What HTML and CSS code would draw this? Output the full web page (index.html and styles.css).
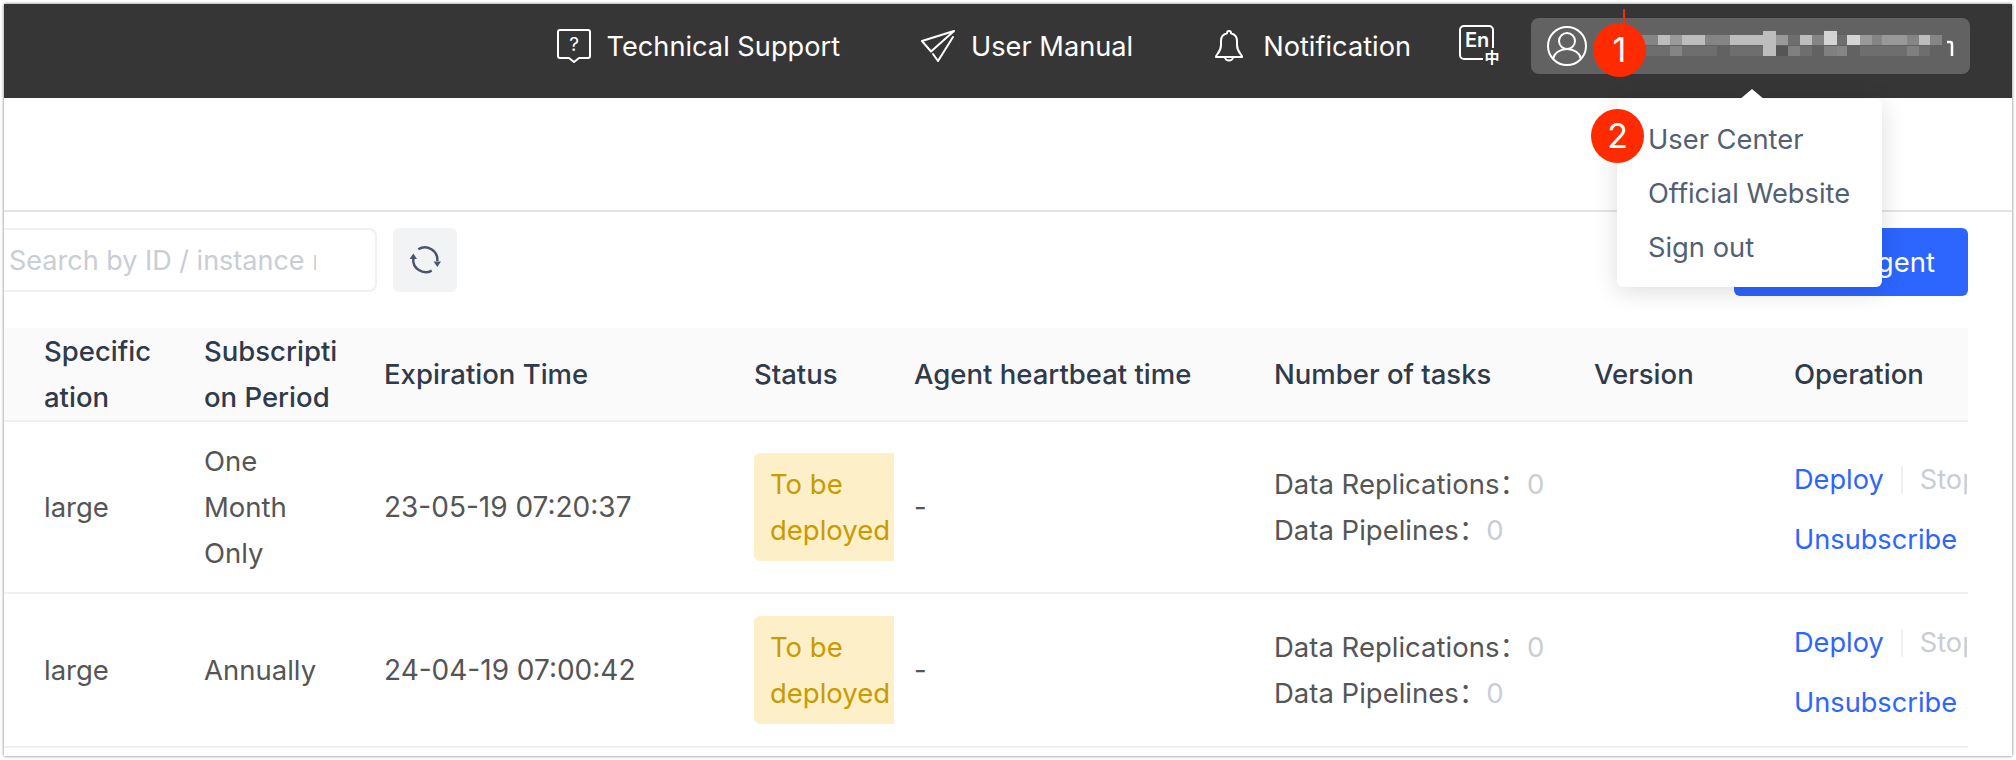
FILE: index.html
```html
<!DOCTYPE html>
<html lang="en">
<head>
    <meta charset="UTF-8">
    <title>Agent Management</title>
    <link rel="stylesheet" href="styles.css">
</head>
<body>
<div class="window">

    <header class="topbar">
        <a class="nav-item">
            <svg class="nav-icon" width="34" height="34" viewBox="0 0 34 34" fill="none" stroke="#fff" stroke-width="2" stroke-linejoin="round">
                <path d="M3 1h28a2 2 0 0 1 2 2v24a2 2 0 0 1-2 2h-9l-5 4-5-4H3a2 2 0 0 1-2-2V3a2 2 0 0 1 2-2z"/>
                <text class="icon-q" x="17" y="22" text-anchor="middle">?</text>
            </svg>
            <span>Technical Support</span>
        </a>
        <a class="nav-item">
            <svg class="nav-icon" width="35" height="34" viewBox="0 0 35 34" fill="none" stroke="#fff" stroke-width="2" stroke-linejoin="round" stroke-linecap="round">
                <path d="M34 2L2 12l9 10.500L34 2z"/>
                <path d="M33 8L18 32l-5-7"/>
            </svg>
            <span>User Manual</span>
        </a>
        <a class="nav-item nav-item-bell">
            <svg class="nav-icon" width="32" height="34" viewBox="0 0 32 34" fill="none" stroke="#fff" stroke-width="2" stroke-linejoin="round">
                <path d="M3 28c-1-2 5-4 5-12v-4a8 8 0 0 1 6-7.700V4a2 2 0 0 1 4 0v.3a8 8 0 0 1 6 7.700v4c0 8 6 10 5 12z"/>
                <path d="M12 28a4 3.500 0 0 0 8 0"/>
            </svg>
            <span>Notification</span>
        </a>
        <svg class="lang-icon" width="42" height="42" viewBox="0 0 42 42" fill="none" stroke="#fff" stroke-width="2">
            <path d="M24 34H5a4 4 0 0 1-4-4V5a4 4 0 0 1 4-4h25a4 4 0 0 1 4 4v18"/>
            <text class="icon-en" x="6" y="22">En</text>
            <text class="icon-zh" x="25.500" y="38">中</text>
        </svg>
        <div class="user-pill">
            <svg width="40" height="40" viewBox="0 0 40 40" fill="none" stroke="#fff" stroke-width="2">
                <circle cx="20" cy="20" r="19"/>
                <circle cx="20" cy="15" r="8"/>
                <path d="M6 33c1-6 7-10 14-10s13 4 14 10"/>
            </svg>
            <svg class="mosaic" width="315" height="40" viewBox="0 0 315 40">
                <g fill="#858585">
                    <rect x="0" y="5" width="18" height="10"/>
                    <rect x="65" y="5" width="25" height="10"/>
                    <rect x="172" y="5" width="12" height="10"/>
                    <rect x="232" y="5" width="10" height="10"/>
                    <rect x="267" y="5" width="12" height="10"/>
                    <rect x="290" y="5" width="12" height="10"/>
                    <rect x="30" y="16" width="12" height="10"/>
                    <rect x="197" y="16" width="10" height="10"/>
                </g>
                <g fill="#bdbdbd">
                    <rect x="18" y="5" width="12" height="10"/>
                    <rect x="42" y="5" width="23" height="10"/>
                    <rect x="90" y="5" width="46" height="10"/>
                    <rect x="123" y="1" width="13" height="25"/>
                    <rect x="160" y="5" width="12" height="10"/>
                    <rect x="279" y="5" width="11" height="10"/>
                </g>
                <g fill="#999">
                    <rect x="30" y="5" width="12" height="10"/>
                    <rect x="136" y="5" width="12" height="10"/>
                    <rect x="220" y="5" width="12" height="10"/>
                    <rect x="242" y="5" width="13" height="10"/>
                    <rect x="255" y="5" width="12" height="10"/>
                </g>
                <g fill="#d4d4d4">
                    <rect x="184" y="1" width="13" height="14"/>
                    <rect x="207" y="5" width="13" height="10"/>
                </g>
                <g fill="#6e6e6e">
                    <rect x="148" y="5" width="12" height="10"/>
                    <rect x="197" y="5" width="10" height="10"/>
                    <rect x="6" y="16" width="24" height="10"/>
                    <rect x="42" y="16" width="35" height="10"/>
                    <rect x="90" y="16" width="33" height="10"/>
                    <rect x="160" y="16" width="12" height="10"/>
                    <rect x="220" y="16" width="22" height="10"/>
                    <rect x="242" y="16" width="25" height="10"/>
                    <rect x="279" y="16" width="11" height="10"/>
                </g>
                <g fill="#808080">
                    <rect x="148" y="16" width="12" height="10"/>
                    <rect x="184" y="16" width="13" height="10"/>
                    <rect x="267" y="16" width="12" height="10"/>
                </g>
                <rect x="136" y="16" width="12" height="10" fill="#555"/>
                <path d="M307 12h3a2 2 0 0 1 2 2v12" fill="none" stroke="#fff" stroke-width="2.500"/>
            </svg>
        </div>
    </header>

    <div class="tabs-area"></div>

    <div class="toolbar">
        <input class="search" type="text" placeholder="Search by ID / instance name">
        <button class="refresh-btn">
            <svg width="32" height="32" viewBox="0 0 32 32" fill="none" stroke="#4a5668" stroke-width="2.500">
                <path d="M22.700 26.600A12.500 12.500 0 0 1 4.300 14.300"/>
                <path d="M9.300 5.300A12.500 12.500 0 0 1 28.300 17"/>
                <path d="M4.300 9.500L8 15H.6z" fill="#4a5668" stroke="none"/>
                <path d="M28.300 23L24.600 17.500H32z" fill="#4a5668" stroke="none"/>
            </svg>
        </button>
        <button class="create-btn">Create Agent</button>
    </div>

    <table class="agent-table">
        <colgroup>
            <col class="col-spec"><col class="col-period"><col class="col-expire"><col class="col-status">
            <col class="col-beat"><col class="col-tasks"><col class="col-version"><col class="col-op">
        </colgroup>
        <thead>
            <tr>
                <th>Specification</th>
                <th>Subscription Period</th>
                <th>Expiration Time</th>
                <th>Status</th>
                <th>Agent heartbeat time</th>
                <th>Number of tasks</th>
                <th>Version</th>
                <th>Operation</th>
            </tr>
        </thead>
        <tbody>
            <tr class="row-tall">
                <td>large</td>
                <td>One Month Only</td>
                <td class="cell-date">23-05-19 07:20:37</td>
                <td class="cell-status"><div class="status-tag">To be deployed</div></td>
                <td>-</td>
                <td>
                    <div>Data Replications：<span class="count">0</span></div>
                    <div>Data Pipelines：<span class="count">0</span></div>
                </td>
                <td></td>
                <td class="cell-op">
                    <div class="op-line"><a class="link">Deploy</a><span class="op-sep"></span><a class="link-off">Stop</a></div>
                    <div class="op-line"><a class="link">Unsubscribe</a></div>
                </td>
            </tr>
            <tr class="row-short">
                <td>large</td>
                <td>Annually</td>
                <td class="cell-date">24-04-19 07:00:42</td>
                <td class="cell-status"><div class="status-tag">To be deployed</div></td>
                <td>-</td>
                <td>
                    <div>Data Replications：<span class="count">0</span></div>
                    <div>Data Pipelines：<span class="count">0</span></div>
                </td>
                <td></td>
                <td class="cell-op">
                    <div class="op-line"><a class="link">Deploy</a><span class="op-sep"></span><a class="link-off">Stop</a></div>
                    <div class="op-line"><a class="link">Unsubscribe</a></div>
                </td>
            </tr>
        </tbody>
    </table>

    <div class="user-menu">
        <a>User Center</a>
        <a>Official Website</a>
        <a>Sign out</a>
    </div>

    <div class="step step-one">1</div>
    <div class="step step-two">2</div>
</div>
</body>
</html>
```

FILE: styles.css
```css
body { margin: 0; background: #fff; font-family: Inter, "Noto Sans CJK SC", sans-serif; font-size: 27.5px; overflow: hidden; }

.window { position: relative; margin: 4px; width: 2008px; height: 752px; overflow: hidden; background: #fff; box-shadow: 0 0 3px rgba(0,0,0,.55); }

/* top bar */
.topbar { height: 94px; background: #363636; color: #fff; display: flex; align-items: center; justify-content: flex-end; padding: 0 42px 10px 0; box-sizing: border-box; }
.nav-item { display: flex; align-items: center; gap: 16px; margin-right: 80px; font-size: 27.2px; }
.nav-item-bell { margin-right: 48px; gap: 18px; }
.lang-icon { margin-right: 30px; }
.icon-q { font: 400 19px Inter, sans-serif; fill: #fff; stroke: none; }
.icon-en { font: 600 20px Inter, sans-serif; fill: #fff; stroke: none; }
.icon-zh { font: 700 15px "Noto Sans CJK SC", sans-serif; fill: #fff; stroke: none; }
.user-pill { width: 439px; height: 56px; box-sizing: border-box; padding-left: 16px; background: #626262; border-radius: 8px; display: flex; align-items: center; }
.mosaic { margin: 8px 0 0 53px; }

.tabs-area { height: 112px; border-bottom: 2px solid #e1e5ea; }

/* toolbar */
.toolbar { display: flex; align-items: flex-start; padding: 16px 44px 0 0; height: 116px; box-sizing: border-box; }
.search { width: 385px; height: 64px; margin-left: -12px; box-sizing: border-box; padding: 0 59px 0 15px; border: 2px solid #f0f1f3; border-radius: 8px; font: 27px Inter, sans-serif; outline: none; }
.search::placeholder { color: #c9cdd4; opacity: 1; }
.refresh-btn { width: 64px; height: 64px; margin-left: 16px; padding: 0; border: 0; border-radius: 6px; background: #f2f3f5; display: flex; align-items: center; justify-content: center; }
.create-btn { width: 234px; height: 68px; margin-left: auto; box-sizing: border-box; padding: 0 33px 0 0; border: 0; border-radius: 6px; background: #2c65ff; color: #fff; font: 27.5px Inter, sans-serif; text-align: right; }

/* table */
.agent-table { width: 1964px; table-layout: fixed; border-collapse: separate; border-spacing: 0; line-height: 46px; }
.col-spec { width: 180px; }
.col-period { width: 180px; }
.col-expire { width: 370px; }
.col-status { width: 160px; }
.col-beat { width: 360px; }
.col-tasks { width: 320px; }
.col-version { width: 200px; }
.col-op { width: 194px; }
.agent-table th { height: 91px; padding: 0 20px; background: #fafafa; border-bottom: 2px solid #eef0f4; color: #2f3a4a; font-weight: 500; text-align: left; word-break: break-all; }
.agent-table td { padding: 0 20px; border-bottom: 2px solid #eef0f4; color: #555; vertical-align: middle; word-break: break-word; }
.agent-table th:first-child, .agent-table td:first-child { padding-left: 40px; }
.row-tall td { height: 170px; }
.row-short td { height: 152px; }

.agent-table .cell-date { font-size: 28px; }
.agent-table .cell-status { padding-right: 0; }
.status-tag { width: 140px; box-sizing: border-box; padding: 8px 0 8px 16px; background: #fdefc8; color: #c89b00; border-radius: 6px 0 0 6px; }
.count { color: #c9cdd4; }

.agent-table .cell-op { padding-right: 1px; padding-top: 5px; height: auto; font-size: 27.2px; }
.op-line { white-space: nowrap; overflow: hidden; display: flex; align-items: center; }
.op-line + .op-line { margin-top: 14px; }
.link { color: #2c65ff; }
.link-off { color: #c9cdd4; }
.op-sep { flex: none; width: 2px; height: 28px; margin: 0 17px; background: #eef0f4; }

/* dropdown */
.user-menu { position: absolute; left: 1613px; top: 95px; width: 265px; box-sizing: border-box; padding: 14px 0 12px 31px; background: #fff; border-radius: 6px; box-shadow: 0 4px 24px rgba(0,0,0,.14); color: #535f72; line-height: 54px; font-size: 27.3px; }
.user-menu a { display: block; }
.user-menu::before { content: ""; position: absolute; left: 122px; top: -10px; border: 13px solid transparent; border-top: 0; border-bottom: 11px solid #fff; }

/* step markers */
.step { position: absolute; width: 53px; height: 54px; border-radius: 50%; background: #ff2b00; color: #fff; font-size: 34px; line-height: 54px; text-align: center; }
.step-one { left: 1589px; top: 19px; }
.step-one::before { content: ""; position: absolute; left: 30px; top: -14px; width: 2px; height: 16px; background: #ff2b00; }
.step-two { left: 1587px; top: 105px; }
```
